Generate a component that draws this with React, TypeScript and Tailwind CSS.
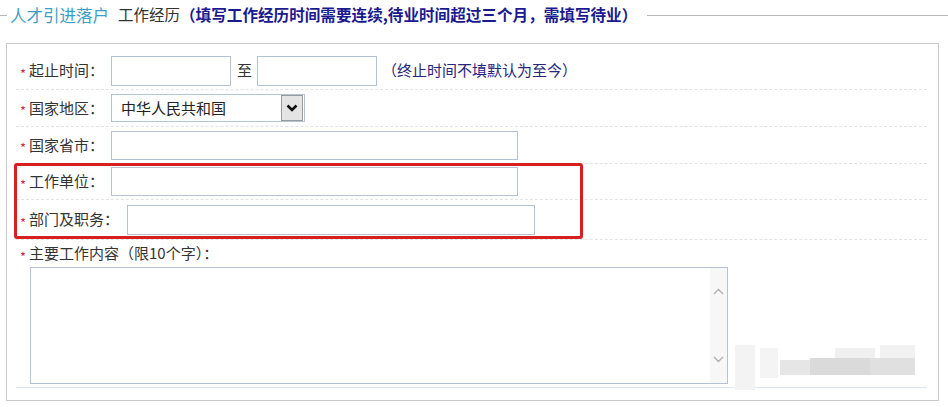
import React from "react";

const font = { fontFamily: '"Noto Sans CJK SC", "Noto Sans", sans-serif' };

function Star() {
  return (
    <span className="w-[10px] text-[13px] leading-none text-[#c8304a] pt-[5px] pl-px">*</span>
  );
}

function Input({ w, h = 30, className = "" }: { w: number; h?: number; className?: string }) {
  return (
    <div
      className={`border border-[#b4c3d3] bg-white ${className}`}
      style={{ width: w, height: h }}
    />
  );
}

export default function App() {
  return (
    <div className="relative w-[948px] h-[407px] bg-white overflow-hidden text-[#333]" style={font}>
      {/* legend */}
      <div className="flex items-center h-[30px]">
        <div className="w-[7px] h-px bg-[#b8b8b8]" />
        <div className="ml-[3px] flex items-center whitespace-nowrap">
          <span className="text-[16.5px] text-[#3c9ec8]">人才引进落户</span>
          <span className="ml-[9px] text-[15.5px] text-[#333]">工作经历</span>
          <span className="text-[15.6px] font-bold text-[#1a1a8e]">
            （填写工作经历时间需要连续,待业时间超过三个月，需填写待业）
          </span>
        </div>
        <div className="ml-[10px] flex-1 h-px bg-[#b8b8b8]" />
      </div>

      {/* fieldset box */}
      <div className="ml-[6px] mt-[13px] w-[933px] h-[358px] border border-[#c9c9c9] pl-[9px] pr-[11px] pt-[8px]">
        {/* row 1 */}
        <div className="flex items-center h-[38px] border-b border-dashed border-[#e3e3e3] pl-[3px] text-[15px]">
          <Star />
          <span className="w-[82px]">起止时间：</span>
          <Input w={120} />
          <span className="ml-[6px] w-[20px]">至</span>
          <Input w={120} />
          <span className="ml-[5px] text-[#26267e]">（终止时间不填默认为至今）</span>
        </div>
        {/* row 2 */}
        <div className="flex items-center h-[37px] border-b border-dashed border-[#e3e3e3] pl-[3px] text-[15px]">
          <Star />
          <span className="w-[82px]">国家地区：</span>
          <div className="flex items-center w-[194px] h-[28px] border border-[#b4c3d3] bg-white">
            <span className="pl-[9px] flex-1 text-[15px] text-[#222]">中华人民共和国</span>
            <div className="w-[22px] h-[26px] mr-px bg-[#e4e4e4] border border-[#9a9a9a] flex items-center justify-center">
              <svg width="12" height="8" viewBox="0 0 12 8">
                <path d="M1.5 1.5 L6 6 L10.5 1.5" fill="none" stroke="#111" strokeWidth="2.6" />
              </svg>
            </div>
          </div>
        </div>
        {/* row 3 */}
        <div className="flex items-center h-[37px] border-b border-dashed border-[#e3e3e3] pl-[3px] text-[15px]">
          <Star />
          <span className="w-[82px]">国家省市：</span>
          <Input w={407} h={29} />
        </div>
        {/* row 4 */}
        <div className="flex items-center h-[36px] border-b border-dashed border-[#e3e3e3] pl-[3px] text-[15px]">
          <Star />
          <span className="w-[82px]">工作单位：</span>
          <Input w={407} h={29} />
        </div>
        {/* row 5 */}
        <div className="flex items-center h-[40px] border-b border-dashed border-[#e3e3e3] pl-[3px] text-[15px]">
          <Star />
          <span className="w-[98px]">部门及职务：</span>
          <Input w={408} h={30} />
        </div>
        {/* row 6 */}
        <div className="h-[148px] border-b border-[#dde6ee] pl-[3px] text-[15px]">
          <div className="flex items-center h-[27px]">
            <Star />
            <span>主要工作内容（限10个字）：</span>
          </div>
          <div className="ml-[11px] flex w-[698px] h-[117px] border border-[#b4c3d3] bg-white">
            <div className="flex-1" />
            <div className="w-[17px] h-full bg-[#f7f7f7] flex flex-col items-center justify-between py-[20px]">
              <svg width="11" height="7" viewBox="0 0 11 7">
                <path d="M1 6 L5.5 1.5 L10 6" fill="none" stroke="#b0b0b0" strokeWidth="1.4" />
              </svg>
              <svg width="11" height="7" viewBox="0 0 11 7">
                <path d="M1 1 L5.5 5.5 L10 1" fill="none" stroke="#b0b0b0" strokeWidth="1.4" />
              </svg>
            </div>
          </div>
        </div>
      </div>

      {/* red annotation box */}
      <div className="absolute left-[14px] top-[163px] w-[569px] h-[76px] border-[3px] border-[#d81f1f] rounded-[3px]" />

      {/* blurred watermark */}
      <div className="absolute left-[735px] top-[345px] w-[20px] h-[45px] bg-[#f3f3f3]" />
      <div className="absolute left-[760px] top-[348px] w-[18px] h-[30px] bg-[#f4f4f4]" />
      <div className="absolute left-[780px] top-[360px] w-[30px] h-[15px] bg-[#e6e6e6]" />
      <div className="absolute left-[810px] top-[358px] w-[60px] h-[17px] bg-[#dadada]" />
      <div className="absolute left-[870px] top-[358px] w-[45px] h-[17px] bg-[#e0e0e0]" />
      <div className="absolute left-[835px] top-[348px] w-[40px] h-[10px] bg-[#f0f0f0]" />
      <div className="absolute left-[880px] top-[345px] w-[35px] h-[13px] bg-[#f1f1f1]" />
    </div>
  );
}
